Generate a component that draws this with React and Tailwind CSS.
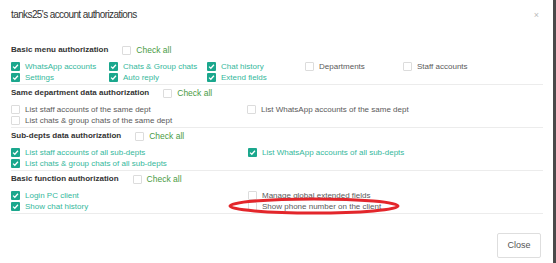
import React from 'react';

const sections = [
  {
    title: 'Basic menu authorization',
    cols: 'grid-cols-[98px_98px_98px_98px_98px]',
    items: [
      ['WhatsApp accounts', true],
      ['Chats & Group chats', true],
      ['Chat history', true],
      ['Departments', false],
      ['Staff accounts', false],
      ['Settings', true],
      ['Auto reply', true],
      ['Extend fields', true],
    ],
  },
  {
    title: 'Same department data authorization',
    cols: 'grid-cols-[236px_1fr]',
    items: [
      ['List staff accounts of the same dept', false],
      ['List WhatsApp accounts of the same dept', false],
      ['List chats & group chats of the same dept', false],
    ],
  },
  {
    title: 'Sub-depts data authorization',
    cols: 'grid-cols-[237px_1fr]',
    items: [
      ['List staff accounts of all sub-depts', true],
      ['List WhatsApp accounts of all sub-depts', true],
      ['List chats & group chats of all sub-depts', true],
    ],
  },
  {
    title: 'Basic function authorization',
    cols: 'grid-cols-[237px_1fr]',
    items: [
      ['Login PC client', true],
      ['Manage global extended fields', false],
      ['Show chat history', true],
      ['Show phone number on the client', false],
    ],
  },
];

function Box({ checked }) {
  if (checked) {
    return (
      <span className="w-[9px] h-[9px] rounded-[1px] bg-[#1ba78d] flex items-center justify-center shrink-0">
        <svg width="7" height="7" viewBox="0 0 10 10">
          <path d="M1.5 5.2 L4 7.5 L8.5 2.5" fill="none" stroke="#fff" strokeWidth="1.8" />
        </svg>
      </span>
    );
  }
  return <span className="w-[9px] h-[9px] rounded-[1px] border border-[#dcdcdc] bg-white shrink-0" />;
}

function Item({ label, checked }) {
  return (
    <div className="h-[11px] flex items-center gap-[5px] whitespace-nowrap">
      <Box checked={checked} />
      <span className={checked ? 'text-[#35b89c]' : 'text-[#5a5a5a]'}>{label}</span>
    </div>
  );
}

export default function App() {
  return (
    <div className="w-[556px] h-[263px] flex bg-[#4a4a4a] font-['Liberation_Sans',Arial,sans-serif] overflow-hidden">
      <div className="w-[553px] h-full bg-white relative flex flex-col">
        {/* Header */}
        <div className="h-[43px] pl-[11px] pr-[14px] pt-[8px] flex justify-between items-start">
          <h4 className="text-[10px] leading-[14px] tracking-[-0.6px] text-[#333]">tanks25's account authorizations</h4>
          <span className="text-[9px] leading-[12px] text-[#bbb] mt-[1px]">×</span>
        </div>

        {/* Body */}
        <div className="pl-[11px] pr-[10px] text-[8px]">
          {sections.map((s) => (
            <div key={s.title} className="pb-[1px] border-b border-[#ececec] mb-px">
              <div className="h-[14px] flex items-center">
                <span className="font-bold text-[#333] text-[8px]">{s.title}</span>
                <span className="ml-[14px] flex items-center gap-[5px]">
                  <Box checked={false} />
                  <span className="text-[#4a9b45] text-[8.5px]">Check all</span>
                </span>
              </div>
              <div className={`mt-[4px] grid ${s.cols}`}>
                {s.items.map(([label, checked]) => (
                  <Item key={label} label={label} checked={checked} />
                ))}
              </div>
            </div>
          ))}
        </div>

        {/* Footer */}
        <div className="flex-1 flex items-end justify-end pr-[12px] pb-[5px]">
          <button className="w-[44px] h-[25px] border border-[#dedede] rounded-[2px] bg-white text-[9px] text-[#555]">
            Close
          </button>
        </div>

        {/* Red annotation ellipse */}
        <svg className="absolute left-[228px] top-[196px]" width="174" height="20" viewBox="0 0 174 20">
          <ellipse cx="86" cy="10" rx="84" ry="7" fill="none" stroke="#e3262b" strokeWidth="3" />
        </svg>
      </div>
    </div>
  );
}
